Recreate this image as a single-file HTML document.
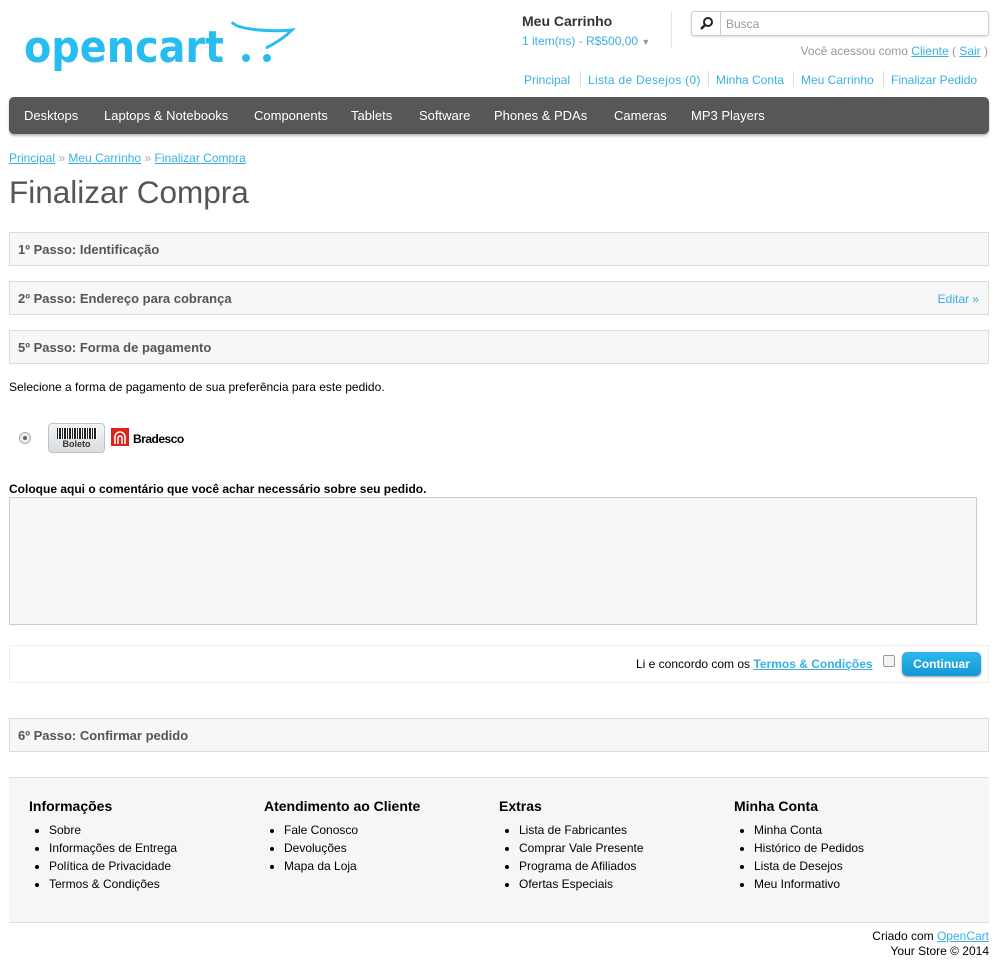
<!DOCTYPE html>
<html><head><meta charset="utf-8"><style>
*{box-sizing:border-box}
body{margin:0;font-family:"Liberation Sans",sans-serif;font-size:12px;color:#000;background:#fff;width:1003px;height:969px;overflow:hidden;position:relative}
a{color:#38b0e3;text-decoration:none}
.abs{position:absolute}
.nav{left:9px;top:97px;width:980px;height:37px;background:#575757;border-radius:5px;box-shadow:0 2px 2px #bbb}
.nav span{position:absolute;top:11px;color:#fff;font-size:13px}
.step{position:absolute;left:9px;width:980px;height:34px;background:#f7f7f7;border:1px solid #dbdbdb;font-weight:bold;font-size:13px;color:#555;padding:9px 8px}
.toplinks a{position:absolute;top:73px;font-size:12px}
.sep{position:absolute;top:71px;width:1px;height:16px;background:#ddd}
.foot h3{margin:0;font-size:14px;position:absolute;top:798px}
.foot ul{position:absolute;top:821px;margin:0;padding-left:20px;line-height:18px}
.foot li{color:#000}
.foot a{color:#000}
</style></head><body>
<svg class="abs" style="left:22px;top:18px" width="275" height="56" viewBox="0 0 275 56">
<text x="2" y="44" font-family="DejaVu Sans,sans-serif" font-weight="bold" font-size="44" fill="#27bdf0" textLength="200" lengthAdjust="spacingAndGlyphs">opencart</text>
<path d="M210 4 C 215 12, 250 14, 270 12 C 262 20, 252 26, 244 30" stroke="#27bdf0" stroke-width="3" fill="none"/>
<circle cx="224" cy="40" r="4" fill="#27bdf0"/><circle cx="245" cy="40" r="4" fill="#27bdf0"/>
</svg>
<div class="abs" style="left:522px;top:13px;font-weight:bold;font-size:14px;color:#333">Meu Carrinho</div>
<div class="abs" style="left:522px;top:34px;color:#38b0e3">1 item(ns) - R$500,00 <span style="color:#999;font-size:9px">▼</span></div>
<div class="abs" style="left:671px;top:12px;width:1px;height:36px;background:#e5e5e5"></div>
<div class="abs" style="left:691px;top:11px;width:298px;height:25px;border:1px solid #ccc;border-radius:3px;box-shadow:0 1px 2px #ddd">
<div class="abs" style="left:0;top:0;width:29px;height:23px;border-right:1px solid #ccc"><svg width="29" height="23"><circle cx="16" cy="10" r="4" stroke="#222" stroke-width="2" fill="none"/><path d="M13 13 L9 17" stroke="#222" stroke-width="2.5"/></svg></div>
<span class="abs" style="left:34px;top:5px;color:#999">Busca</span></div>
<div class="abs" style="right:15px;top:44px;color:#999">Você acessou como <a style="text-decoration:underline">Cliente</a> ( <a style="text-decoration:underline">Sair</a> )</div>
<div class="toplinks"><a style="left:524px">Principal</a><div class="sep" style="left:580px"></div><a style="left:588px;letter-spacing:0.3px">Lista de Desejos (0)</a><div class="sep" style="left:708px"></div><a style="left:716px">Minha Conta</a><div class="sep" style="left:793px"></div><a style="left:801px">Meu Carrinho</a><div class="sep" style="left:883px"></div><a style="left:891px">Finalizar Pedido</a></div>
<div class="abs nav"><span style="left:15px">Desktops</span><span style="left:95px">Laptops &amp; Notebooks</span><span style="left:245px">Components</span><span style="left:342px">Tablets</span><span style="left:410px">Software</span><span style="left:485px">Phones &amp; PDAs</span><span style="left:605px">Cameras</span><span style="left:682px">MP3 Players</span></div>
<div class="abs" style="left:9px;top:151px"><a style="text-decoration:underline">Principal</a> <span style="color:#aaa">»</span> <a style="text-decoration:underline">Meu Carrinho</a> <span style="color:#aaa">»</span> <a style="text-decoration:underline">Finalizar Compra</a></div>
<div class="abs" style="left:9px;top:174px;font-size:31.5px;color:#555">Finalizar Compra</div>
<div class="step" style="top:232px">1º Passo: Identificação</div>
<div class="step" style="top:281px">2º Passo: Endereço para cobrança<a style="position:absolute;right:9px;top:10px;font-weight:normal;font-size:12px">Editar »</a></div>
<div class="step" style="top:330px">5º Passo: Forma de pagamento</div>
<div class="abs" style="left:9px;top:380px">Selecione a forma de pagamento de sua preferência para este pedido.</div>
<div class="abs" style="left:19px;top:432px;width:12px;height:12px;border-radius:50%;border:1px solid #aaa;background:#eee"><div style="margin:3px;width:4px;height:4px;border-radius:50%;background:#666"></div></div>
<div class="abs" style="left:48px;top:423px;width:57px;height:30px;border-radius:4px;background:linear-gradient(#f4f4f4,#d8dde2);border:1px solid #c0c4c8;text-align:center">
<div style="margin:4px auto 0;width:40px;height:11px;background:repeating-linear-gradient(90deg,#222 0 1px,#fff 1px 2px,#222 2px 4px,#fff 4px 5px)"></div><div style="font-weight:bold;font-size:9px;color:#333">Boleto</div></div>
<svg class="abs" style="left:111px;top:428px" width="18" height="18"><rect width="18" height="18" fill="#d9261c"/><path d="M4 16 V9 A5 5 0 0 1 14 9 V16 M7 16 V10 A2 2 0 0 1 11 10 V16" stroke="#fff" stroke-width="1.5" fill="none"/></svg>
<div class="abs" style="left:133px;top:432px;font-weight:bold;font-size:12px;letter-spacing:-0.5px">Bradesco</div>
<div class="abs" style="left:9px;top:482px;font-weight:bold">Coloque aqui o comentário que você achar necessário sobre seu pedido.</div>
<div class="abs" style="left:9px;top:497px;width:968px;height:128px;border:1px solid #ccc;background:#f6f6f6"></div>
<div class="abs" style="left:9px;top:645px;width:980px;height:38px;border:1px solid #eee"></div>
<div class="abs" style="left:636px;top:657px">Li e concordo com os <a style="text-decoration:underline;font-weight:bold">Termos &amp; Condições</a></div>
<div class="abs" style="left:883px;top:655px;width:12px;height:12px;border:1px solid #999;border-radius:2px;background:#f4f4f4"></div>
<div class="abs" style="left:902px;top:652px;width:79px;height:24px;border-radius:5px;background:linear-gradient(#2cb8ec,#1498d8);color:#fff;font-weight:bold;text-align:center;line-height:24px;box-shadow:0 1px 2px #999">Continuar</div>
<div class="step" style="top:718px">6º Passo: Confirmar pedido</div>
<div class="abs foot" style="left:9px;top:777px;width:980px;height:146px;background:#f6f6f6;border-top:1px solid #ddd;border-bottom:1px solid #ddd"></div>
<div class="foot">
<h3 style="left:29px">Informações</h3><ul style="left:29px"><li><a>Sobre</a></li><li><a>Informações de Entrega</a></li><li><a>Política de Privacidade</a></li><li><a>Termos &amp; Condições</a></li></ul>
<h3 style="left:264px">Atendimento ao Cliente</h3><ul style="left:264px"><li><a>Fale Conosco</a></li><li><a>Devoluções</a></li><li><a>Mapa da Loja</a></li></ul>
<h3 style="left:499px">Extras</h3><ul style="left:499px"><li><a>Lista de Fabricantes</a></li><li><a>Comprar Vale Presente</a></li><li><a>Programa de Afiliados</a></li><li><a>Ofertas Especiais</a></li></ul>
<h3 style="left:734px">Minha Conta</h3><ul style="left:734px"><li><a>Minha Conta</a></li><li><a>Histórico de Pedidos</a></li><li><a>Lista de Desejos</a></li><li><a>Meu Informativo</a></li></ul>
</div>
<div class="abs" style="right:14px;top:929px;text-align:right;line-height:15px">Criado com <a style="text-decoration:underline">OpenCart</a><br>Your Store © 2014</div>
</body></html>
